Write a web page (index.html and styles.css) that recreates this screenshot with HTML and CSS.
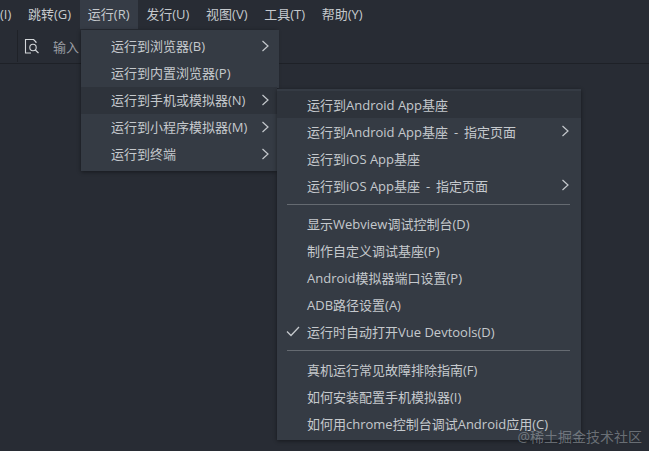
FILE: index.html
```html
<!DOCTYPE html>
<html lang="zh-CN">
<head>
<meta charset="utf-8">
<title>运行菜单</title>
<link rel="stylesheet" href="styles.css">
</head>
<body>
<div class="app">
  <nav class="menubar">
    <span class="mi clip">(I)</span>
    <span class="mi">跳转(G)</span>
    <span class="mi active">运行(R)</span>
    <span class="mi">发行(U)</span>
    <span class="mi">视图(V)</span>
    <span class="mi">工具(T)</span>
    <span class="mi">帮助(Y)</span>
  </nav>
  <div class="toolbar">
    <div class="search">
      <svg class="search-icon" width="16" height="16" viewBox="0 0 16 16" fill="none" stroke="#d4d7da" stroke-width="1.1">
        <path d="M10 1.5H1.5V15H7"/>
        <path d="M9.5 1.5L12 4V5"/>
        <circle cx="9" cy="9.5" r="3.2"/>
        <path d="M11.3 12L14.5 15"/>
      </svg>
      <span class="search-text">输入</span>
    </div>
  </div>
  <div class="editor"></div>

  <div class="menu menu-run">
    <div class="row"><span>运行到浏览器(B)</span><svg class="arrow" viewBox="0 0 9 12"><path d="M1.5 1L7 6L1.5 11"/></svg></div>
    <div class="row"><span>运行到内置浏览器(P)</span></div>
    <div class="row current"><span>运行到手机或模拟器(N)</span><svg class="arrow" viewBox="0 0 9 12"><path d="M1.5 1L7 6L1.5 11"/></svg></div>
    <div class="row"><span>运行到小程序模拟器(M)</span><svg class="arrow" viewBox="0 0 9 12"><path d="M1.5 1L7 6L1.5 11"/></svg></div>
    <div class="row"><span>运行到终端</span><svg class="arrow" viewBox="0 0 9 12"><path d="M1.5 1L7 6L1.5 11"/></svg></div>

    <div class="menu menu-sub">
      <div class="row current"><span>运行到Android App基座</span></div>
      <div class="row"><span>运行到Android App基座<span class="dash"> - </span>指定页面</span><svg class="arrow" viewBox="0 0 9 12"><path d="M1.5 1L7 6L1.5 11"/></svg></div>
      <div class="row"><span>运行到iOS App基座</span></div>
      <div class="row"><span>运行到iOS App基座<span class="dash"> - </span>指定页面</span><svg class="arrow" viewBox="0 0 9 12"><path d="M1.5 1L7 6L1.5 11"/></svg></div>
      <div class="sep"></div>
      <div class="row"><span>显示Webview调试控制台(D)</span></div>
      <div class="row"><span>制作自定义调试基座(P)</span></div>
      <div class="row"><span>Android模拟器端口设置(P)</span></div>
      <div class="row"><span>ADB路径设置(A)</span></div>
      <div class="row"><svg class="check" viewBox="0 0 14 11"><path d="M1 5.5L5 9.5L13 1"/></svg><span>运行时自动打开Vue Devtools(D)</span></div>
      <div class="sep"></div>
      <div class="row"><span>真机运行常见故障排除指南(F)</span></div>
      <div class="row"><span>如何安装配置手机模拟器(I)</span></div>
      <div class="row"><span>如何用chrome控制台调试Android应用(C)</span></div>
    </div>
  </div>

  <div class="watermark">@稀土掘金技术社区</div>
</div>
</body>
</html>
```

FILE: styles.css
```css
* { box-sizing: border-box; }
html, body { margin: 0; height: 100%; overflow: hidden; }
body {
  background: #282c34;
  color: #c5c9cd;
  font: 13px/18px "Open Sans", "Noto Sans CJK SC", sans-serif;
}
.app { position: relative; width: 649px; height: 451px; display: flex; flex-direction: column; }

.menubar { display: flex; height: 30px; background: #282c34; }
.mi { display: flex; align-items: center; padding: 0 8.7px 1px 8px; height: 29px; white-space: nowrap; }
.mi.clip { width: 20px; padding: 0 0 1px; }
.mi.active { background: #363c46; }

.toolbar { height: 34px; padding-left: 17px; border-bottom: 1px solid #1e2127; background: #282c34; }
.search { display: flex; align-items: center; height: 32px; padding-left: 6px; gap: 13px; border-left: 1px solid #1f2228; }
.search-icon { flex: none; }
.search-text { color: #9a9ea4; white-space: nowrap; padding-top: 2px; }
.editor { flex: 1; background: #282c34; }

.menu { background: #353b44; box-shadow: 0 1px 4px rgba(0, 0, 0, .45); }
.menu-run { position: absolute; left: 81px; top: 30px; width: 196px; height: 141px; padding-top: 3px; }
.menu-run::after { content: ""; position: absolute; left: 196px; top: 0; width: 2px; height: 58px; background: #353b44; }
.menu-sub { position: absolute; left: 196px; top: 59px; width: 304px; height: 351px; padding-top: 2px; z-index: 1; }
.row { position: relative; display: flex; align-items: center; height: 27px; padding: 0 0 2px 30px; white-space: nowrap; }
.menu-sub .row { padding: 0 0 0 30px; }
.row.current { background: #2e333b; }
.dash { padding: 0 2.5px; white-space: pre; }
.arrow { position: absolute; right: 7px; top: 7px; width: 9px; height: 12px; fill: none; stroke: #c5c9cd; stroke-width: 1.2; }
.menu-sub .arrow { right: 11px; }
.check { position: absolute; left: 9px; top: 8px; width: 14px; height: 11px; fill: none; stroke: #c5c9cd; stroke-width: 1.3; }
.sep { height: 1px; margin: 5px 11px 5px 10px; background: #656a71; }

.watermark { position: absolute; z-index: 2; right: 7px; top: 427px; font-size: 14px; line-height: 20px; color: rgba(190, 195, 200, .45); white-space: nowrap; }
```
